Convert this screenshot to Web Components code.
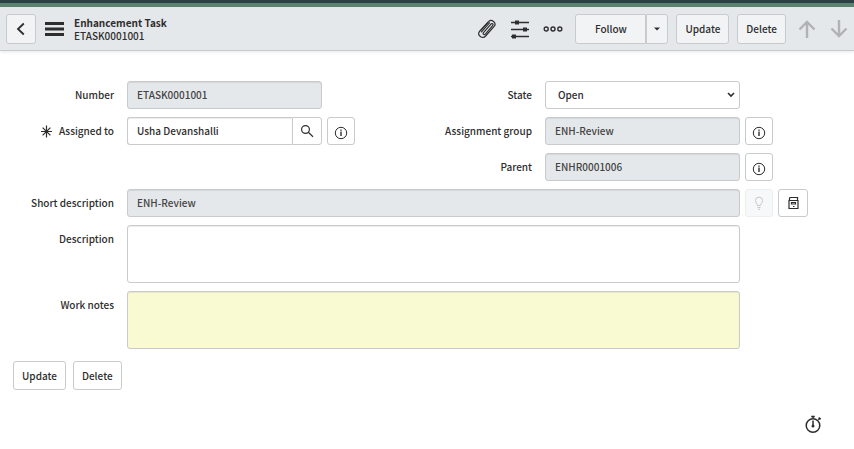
<!DOCTYPE html>
<html lang="en">
<head>
<meta charset="utf-8">
<title>Enhancement Task ETASK0001001</title>
<style>
body{margin:0;background:#fff;color:#2e2e2e;font:500 10px/16px "Noto Sans CJK SC","Noto Sans",sans-serif}
</style>
</head>
<body>
<record-page></record-page>
<script>
const icons = {
  back:'<svg width="16" height="16" viewBox="0 0 16 16"><path d="M10.800 2.500 5 8l5.800 5.500" fill="none" stroke="#2e2e2e" stroke-width="1.800"/></svg>',
  menu:'<svg width="19" height="16" viewBox="0 0 19 16"><path d="M0 2.500h19M0 8h19M0 13.500h19" stroke="#2e2e2e" stroke-width="2.800"/></svg>',
  clip:'<svg width="20" height="20" viewBox="0 0 20 20"><g fill="none" stroke="#2e2e2e" stroke-width="1.200" stroke-linecap="round"><path d="M4.200 10.800 11.600 2.600c3-3 8.200 1.200 5.700 4.600L8.600 17c-3.200 3.500-8.800-.9-6.100-4.500"/><path d="M2.500 12.500 10.800 3.400M6.300 13.800l7.900-9M8.600 14.800l7-8.100M14.200 4.800c1.300-.8 2.600.5 1.400 1.900M6.300 13.800c-1 1.200.9 2.600 2.300 1M4.500 12.800l8-9"/></g></svg>',
  sliders:'<svg width="20" height="20" viewBox="0 0 20 20"><path d="M1 3.500h18M1 10.500h18M1 17.500h18" stroke="#2e2e2e" stroke-width="1.400"/><path d="M5 1.500h4v4H5zM13 8.500h4v4h-4zM2 15.500h4v4H2z" fill="#2e2e2e"/></svg>',
  dots:'<svg width="20" height="8" viewBox="0 0 20 8"><g fill="none" stroke="#2e2e2e" stroke-width="1.400"><circle cx="3.200" cy="4" r="2"/><circle cx="10" cy="4" r="2"/><circle cx="16.800" cy="4" r="2"/></g></svg>',
  caret:'<svg width="6" height="4" viewBox="0 0 6 4"><path d="M0 .5h6L3 3.500z" fill="#2e2e2e"/></svg>',
  up:'<svg width="18" height="18" viewBox="0 0 18 18"><path d="M9 18V2M1.500 9.500 9 2l7.500 7.500" fill="none" stroke="#b0b2b4" stroke-width="2.400"/></svg>',
  down:'<svg width="18" height="18" viewBox="0 0 18 18"><path d="M9 0v16M1.500 8.500 9 16l7.500-7.500" fill="none" stroke="#b0b2b4" stroke-width="2.400"/></svg>',
  search:'<svg width="14" height="14" viewBox="0 0 14 14"><g fill="none" stroke="#2e2e2e" stroke-width="1.200"><circle cx="5.500" cy="5.500" r="3.900"/><path d="m8.300 8.300 4.700 4.400"/></g></svg>',
  info:'<svg width="14" height="18" viewBox="0 0 14 18"><circle cx="7" cy="11" r="5.700" fill="none" stroke="#2e2e2e"/><path d="M6.300 9.500h1.400v4.500H6.300zM6.300 7.500h1.400v1.200H6.300z" fill="#2e2e2e"/></svg>',
  bulb:'<svg width="10" height="14" viewBox="0 0 10 14"><path d="M3.500 9.500C3.500 7.500 1.500 7 1.500 4.600a3.500 3.500 0 0 1 7 0C8.500 7 6.500 7.500 6.500 9.500zM3.500 11.500h3M4 13.300h2" fill="none" stroke="#c6c8ca"/></svg>',
  book:'<svg width="11" height="14" viewBox="0 0 11 14"><path d="M1.500 4.500V2.500q0-1 1-1h7v3M1 4.500h9v8H1zM3.500 6.500h4v1.500h-4zM5 10.500h1.500" fill="none" stroke="#2e2e2e" stroke-width="1.200"/></svg>',
  timer:'<svg width="18" height="20" viewBox="0 0 18 20"><g fill="none" stroke="#2e2e2e" stroke-width="1.500"><circle cx="9" cy="11.500" r="6.800"/><path d="M9 6.500V13M7.200 2.500h3.600M9 2.500v2M14.300 5.700l1.500-1.500M14.700 3.700l2 1.500"/></g><circle cx="9" cy="12" r="1.500" fill="#2e2e2e"/></svg>',
  star:'<svg width="13" height="13" viewBox="0 0 13 13"><path d="M6.500.5v12M1 6.500h11M2.600 2.600l7.800 7.800M10.400 2.600l-7.800 7.800" stroke="#2e2e2e" stroke-width="1.200"/></svg>'
};
const base = `*{box-sizing:border-box}svg{display:block;flex:none}
button,input,select,textarea{font:inherit;color:inherit;margin:0}
button{display:flex;align-items:center;justify-content:center;cursor:pointer}`;

class BaseElement extends HTMLElement {
  connectedCallback(){
    if(this.shadowRoot) return;
    this.attachShadow({mode:'open'}).innerHTML = `<style>${base}</style>` + this.view();
  }
  attr(name){ return this.getAttribute(name) || ''; }
}

class ActionButton extends BaseElement {
  view(){
    const icon = this.attr('icon');
    return `<style>
:host{display:block;flex:none}
button{width:100%;height:100%;min-height:28px;padding:0 8px;background:var(--button-bg,#fff);border:1px solid #c8cacc;border-radius:var(--radius,3px)}
:host([icon]) button{padding:0}
:host([plain]) button{background:none;border:0}
button:disabled{background:#f7f8fa;border-color:#eceeef;cursor:default}
</style><button type="button" ${icon?`aria-label="${this.attr('name')}"`:''} ${this.hasAttribute('disabled')?'disabled':''}>${icon?icons[icon]:'<slot></slot>'}</button>`;
  }
}
customElements.define('action-button', ActionButton);

class FormField extends BaseElement {
  view(){
    const kind = this.attr('kind'), value = this.attr('value'), lock = this.hasAttribute('locked') ? 'readonly' : '';
    const control = kind==='select'
      ? `<span class="select"><select id="control"><option>${value}</option></select><svg width="8" height="6" viewBox="0 0 8 6"><path d="m1 1 3 3 3-3" fill="none" stroke="#2e2e2e" stroke-width="1.600"/></svg></span>`
      : kind==='textarea' ? `<textarea id="control"></textarea>`
      : `<input id="control" type="text" value="${value}" ${lock}>`;
    return `<style>
:host{display:grid;grid-template-columns:114px minmax(0,1fr) 96px;align-items:start}
label{display:flex;justify-content:flex-end;align-items:center;gap:6px;height:28px;white-space:nowrap}
.control{display:flex;margin-left:13px}
input,select,textarea{display:block;width:100%;min-width:0;height:28px;padding:0 9px 2px;border:1px solid #c8cacc;border-radius:3px;background:#fff;outline:0;box-shadow:inset 0 1px 1px #00000013}
input[readonly]{background:#e4e8eb;color:#444}
textarea{height:58px;resize:none;background:var(--area-bg,#fff)}
select{appearance:none;padding:0 12px;box-shadow:none}
.select{display:grid;width:100%;align-items:center}
.select>*{grid-area:1/1}.select svg{justify-self:end;margin-right:5px;pointer-events:none}
:host([lookup]) input{border-radius:3px 0 0 3px;border-right:0}
.find{width:30px;--radius:0 3px 3px 0}
.extras{display:flex;gap:5px;padding-left:5px}
</style><label for="control">${this.hasAttribute('required')?icons.star:''}<span>${this.attr('label')}</span></label>
<div class="control">${control}${this.hasAttribute('lookup')?'<action-button class="find" icon="search" name="Look up user"></action-button>':''}</div>
<div class="extras"><slot></slot></div>`;
  }
}
customElements.define('form-field', FormField);

class RecordHeader extends BaseElement {
  view(){
    return `<style>
:host{display:block;border-top:3px solid #2a4143;box-shadow:0 1px 3px #00000018}
header{display:flex;align-items:center;height:48px;padding:0 6px;border-top:4px solid #5b8170;border-bottom:1px solid #c8cacc;background:#e4e8eb;--button-bg:#f1f3f5}
.back{width:30px;height:30px}
.menu{width:19px;height:30px;margin:0 10px 0 9px}
h1{margin:0;font:inherit;line-height:13px;white-space:nowrap}
h1 strong{display:block;font-weight:700}
.tools{display:flex;gap:13px;margin-left:auto}
.tools action-button{width:20px}
.actions{display:flex;gap:8px;margin-left:12px}
.actions action-button,.split{height:30px}
.split{display:flex}
.follow{width:71px;--radius:3px 0 0 3px}
.more{width:22px;--radius:0 3px 3px 0}
.nav{display:flex;gap:14px;margin-left:12px}
.nav action-button{width:18px}
</style><header>
<action-button class="back" icon="back" name="Back"></action-button>
<action-button class="menu" plain icon="menu" name="Menu"></action-button>
<h1><strong>Enhancement Task</strong>ETASK0001001</h1>
<div class="tools"><action-button plain icon="clip" name="Attachments"></action-button><action-button plain icon="sliders" name="Personalize form"></action-button><action-button plain icon="dots" name="More options"></action-button></div>
<div class="actions"><div class="split"><action-button class="follow">Follow</action-button><action-button class="more" icon="caret" name="Follow options"></action-button></div><action-button>Update</action-button><action-button>Delete</action-button></div>
<div class="nav"><action-button plain icon="up" name="Previous record"></action-button><action-button plain icon="down" name="Next record"></action-button></div>
</header>`;
  }
}
customElements.define('record-header', RecordHeader);

class RecordPage extends BaseElement {
  view(){
    return `<style>
:host{display:block}
form{display:grid;gap:8px;padding:30px 18px 0 0}
.halves{display:grid;grid-template-columns:1fr 1fr}
.column{display:grid;gap:8px;align-content:start}
.icon{width:28px;height:28px}.wide{width:30px}
.notes{--area-bg:#f9f9d2}
.actions{display:flex;gap:7px;padding:12px 13px 0}
.actions action-button{height:29px}
footer{display:flex;justify-content:flex-end;padding:20px 30px 0}
footer action-button{width:22px}
</style><record-header></record-header>
<main><form>
<div class="halves">
<div class="column">
<form-field label="Number" value="ETASK0001001" locked></form-field>
<form-field label="Assigned to" value="Usha Devanshalli" required lookup><action-button class="icon" icon="info" name="Preview user"></action-button></form-field>
</div>
<div class="column">
<form-field label="State" value="Open" kind="select"></form-field>
<form-field label="Assignment group" value="ENH-Review" locked><action-button class="icon" icon="info" name="Preview group"></action-button></form-field>
<form-field label="Parent" value="ENHR0001006" locked><action-button class="icon" icon="info" name="Preview parent"></action-button></form-field>
</div>
</div>
<form-field label="Short description" value="ENH-Review" locked><action-button class="icon" icon="bulb" name="Suggestion" disabled></action-button><action-button class="icon wide" icon="book" name="Search knowledge"></action-button></form-field>
<form-field label="Description" kind="textarea"></form-field>
<form-field class="notes" label="Work notes" kind="textarea"></form-field>
</form>
<div class="actions"><action-button>Update</action-button><action-button>Delete</action-button></div>
</main>
<footer><action-button plain icon="timer" name="Response time"></action-button></footer>`;
  }
}
customElements.define('record-page', RecordPage);
</script>
</body>
</html>
